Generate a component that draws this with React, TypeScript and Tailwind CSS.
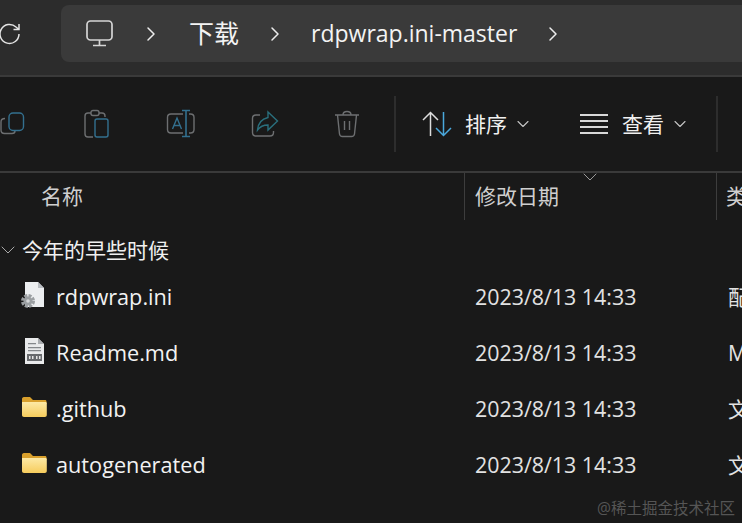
import React from 'react';
import { ChevronDown, ChevronRight } from 'lucide-react';

const font = 'font-["Open_Sans","Noto_Sans_CJK_SC",sans-serif]';

const toolbarIcons = [
    <svg key="copy" className="mr-[2px]" width="26" height="26" viewBox="0 0 26 26" fill="none" strokeWidth="1.4">
        <path d="M5 7.500C2.500 7.500 1 9 1 11v8c0 2 1.500 3.500 3.500 3.500H12c1.500 0 3-1 3-2.500" stroke="#6d6f71" />
        <rect x="9" y="2" width="14.500" height="17.500" rx="4" stroke="#33708f" />
    </svg>,
    <svg key="paste" width="28" height="30" viewBox="0 0 28 30" fill="none" strokeWidth="1.4">
        <path d="M8 4H5C3 4 2 5.500 2 7v18c0 1.500 1 3 3 3h5M22 8V7c0-1.500-1-3-3-3h-3" stroke="#6d6f71" />
        <rect x="8" y="1.500" width="8" height="5" rx="2" stroke="#6d6f71" />
        <rect x="12" y="10" width="13" height="18" rx="2" stroke="#33708f" />
    </svg>,
    <svg key="rename" width="30" height="30" viewBox="0 0 30 30" fill="none" strokeWidth="1.4">
        <path d="M17 5H5C3 5 1.500 6.500 1.500 8.500v12C1.500 22.500 3 24 5 24h12M23 5h1.500c2 0 3.500 1.500 3.500 3.500v12c0 2-1.500 3.500-3.500 3.500H23" stroke="#6d6f71" />
        <path d="M16 1.500h8M20 1.500v26M16 27.500h8" stroke="#33708f" strokeWidth="1.600" />
        <path d="M6.500 20 11 9l4.500 11M8 16.500h6" stroke="#33708f" />
    </svg>,
    <svg key="share" width="28" height="28" viewBox="0 0 28 28" fill="none" strokeWidth="1.4">
        <path d="M9 5H5C3 5 1.500 6.500 1.500 8.500v14C1.500 24.500 3 26 5 26h14c2 0 3.500-1.500 3.500-3.500V21" stroke="#6d6f71" />
        <path d="M17 2l9.500 9-9.500 9v-5c-5 0-8 1.500-10.500 5 .5-6 4-11 10.500-12.500z" stroke="#2a6f7d" />
    </svg>,
    <svg key="trash" width="26" height="28" viewBox="0 0 26 28" fill="none" stroke="#6d6f71" strokeWidth="1.4">
        <path d="M1 5h24M9 5c0-2 1.500-3.500 4-3.500S17 3 17 5M3.500 5l2 19c.2 1.500 1.300 2.500 3 2.500h9c1.700 0 2.800-1 3-2.500l2-19M10.500 11v9M15.500 11v9" />
    </svg>,
];

const SheetIcon = () => (
    <svg width="24" height="28" viewBox="0 0 24 28">
        <path d="M4 1h13l6 6v19H4z" fill="#eceef0" />
        <path d="M17 1l6 6h-6z" fill="#b9bdc2" />
        <circle cx="7" cy="20" r="5.500" fill="none" stroke="#9b9fa2" strokeWidth="3" strokeDasharray="3 1.300" />
        <circle cx="7" cy="20" r="4.500" fill="#9b9fa2" />
        <circle cx="7" cy="20" r="1.800" fill="#d5d7d9" />
    </svg>
);

const ReadmeIcon = () => (
    <svg width="24" height="28" viewBox="0 0 24 28">
        <path d="M4 1h13l6 6v20H4z" fill="#e9eaeb" />
        <path d="M17 1l6 6h-6z" fill="#a9acaf" />
        <path d="M7 6h8v1.300H7zM7 10h13v1.300H7zM7 13h13v1.300H7z" fill="#85888b" />
        <path d="M6 17h15v7H6z" fill="#686a6d" />
        <path d="M8 19h1.500v3H8zM11 19h1.500v3H11zM15 19h1.500v3H15zM18 19h1.500v3H18z" fill="#e6e6e6" />
    </svg>
);

const FolderIcon = () => (
    <svg width="26" height="22" viewBox="0 0 26 22">
        <defs>
            <linearGradient id="folderFill" x1="0" y1="0" x2="0" y2="1">
                <stop offset="0" stopColor="#fde9a5" />
                <stop offset="1" stopColor="#f6cc5c" />
            </linearGradient>
        </defs>
        <path d="M1 3c0-1 .6-2 2-2h6l3 3h12c1 0 1.500.7 1.500 1.500V8H1z" fill="#d9a02c" />
        <path d="M1 6h23.500c.8 0 1.300.6 1.300 1.400V19c0 1.200-.8 2-2 2H3c-1.200 0-2-.8-2-2z" fill="url(#folderFill)" />
    </svg>
);

const rows = [
    { icon: <SheetIcon />, name: 'rdpwrap.ini', type: '配' },
    { icon: <ReadmeIcon />, name: 'Readme.md', type: 'M' },
    { icon: <FolderIcon />, name: '.github', type: '文' },
    { icon: <FolderIcon />, name: 'autogenerated', type: '文' },
];

export default function App() {
    return (
        <div className={`relative w-[742px] h-[523px] overflow-hidden bg-[#191919] text-[#f0f0f0] ${font}`}>
            {/* address bar */}
            <div className="h-[77px] bg-[#2c2c2c] border-b-2 border-[#3a3a3a] flex items-start">
                <div className="w-[61px] pt-[22px] shrink-0 overflow-hidden">
                    <svg className="-ml-[2px]" width="24" height="24" viewBox="0 0 24 24" fill="none" stroke="#e4e4e4" strokeWidth="1.500">
                        <path d="M21 12a9.500 9.500 0 1 1-3-7l3 2.500M21 2v5.500h-5.500" />
                    </svg>
                </div>
                <div className="mt-[5px] w-[681px] h-[57px] bg-[#3a3a3a] rounded-l-lg flex items-center pl-[25px]">
                    <svg className="shrink-0" width="27" height="27" viewBox="0 0 27 27" fill="none" stroke="#d5d5d5" strokeWidth="1.700">
                        <rect x="1" y="1" width="25" height="19" rx="3.500" />
                        <path d="M13.500 20v5M7 25.500h13" />
                    </svg>
                    <ChevronRight className="ml-[26px] text-[#ededed] shrink-0" size={24} strokeWidth={1.500} />
                    <span className="ml-[26px] text-[25px] leading-none text-[#f3f3f3]">下载</span>
                    <ChevronRight className="ml-[24px] text-[#ededed] shrink-0" size={24} strokeWidth={1.500} />
                    <span className="ml-[24px] text-[23px] leading-none text-[#f3f3f3] whitespace-nowrap">rdpwrap.ini-master</span>
                    <ChevronRight className="ml-[24px] text-[#ededed] shrink-0" size={24} strokeWidth={1.500} />
                </div>
            </div>

            {/* toolbar */}
            <div className="h-[96px] flex items-center border-b-2 border-[#3a3a3a]">
                <div className="flex items-center w-[394px] h-[56px] gap-[55px] shrink-0">
                    {toolbarIcons}
                </div>
                <div className="h-[56px] border-l-2 border-[#2d2d2d] flex items-center pl-[26px]">
                    <svg className="shrink-0" width="30" height="26" viewBox="0 0 30 26" fill="none" strokeWidth="1.500">
                        <path d="M1 9l7.500-7.500L16 9M8.500 1.500V25" stroke="#dcdcdc" />
                        <path d="M14 17l7.500 7.500L29 17M21.500 1v23.500" stroke="#4aa8dc" />
                    </svg>
                    <span className="ml-[13px] text-[21px] leading-none">排序</span>
                    <ChevronDown className="ml-[6px] text-[#c5c5c5] shrink-0" size={20} strokeWidth={1.300} />
                    <div className="ml-[47px] w-[28px] flex flex-col gap-[4px] shrink-0">
                        <div className="h-[2px] bg-[#d8d8d8]" />
                        <div className="h-[2px] bg-[#d8d8d8]" />
                        <div className="h-[2px] bg-[#d8d8d8]" />
                        <div className="h-[2px] bg-[#d8d8d8]" />
                    </div>
                    <span className="ml-[14px] text-[21px] leading-none">查看</span>
                    <ChevronDown className="ml-[6px] text-[#c5c5c5] shrink-0" size={20} strokeWidth={1.300} />
                    <div className="ml-[26px] h-[56px] border-l-2 border-[#2d2d2d]" />
                </div>
            </div>

            {/* column headers */}
            <div className="h-[47px] flex text-[21px] text-[#cfcfcf] leading-none">
                <div className="w-[464px] shrink-0 pl-[41px] pt-[13px]">名称</div>
                <div className="relative w-[252px] shrink-0 border-l border-[#3d3d3d] pl-[10px] pt-[13px]">
                    修改日期
                    <ChevronDown className="absolute left-[113px] -top-[8px] text-[#9a9a9a]" size={24} strokeWidth={1} />
                </div>
                <div className="border-l border-[#3d3d3d] pl-[9px] pt-[13px] whitespace-nowrap">类</div>
            </div>

            {/* group header */}
            <div className="h-[49px] pt-[11px] flex items-center text-[#f0f0f0]">
                <ChevronDown className="-ml-[4px] text-[#a9a9a9] shrink-0" size={24} strokeWidth={1} />
                <span className="ml-[2px] text-[21px] leading-none">今年的早些时候</span>
            </div>

            {/* file rows */}
            {rows.map((row) => (
                <div key={row.name} className="h-[56px] flex items-center leading-none">
                    <div className="w-[56px] -mt-[4px] pl-[21px] flex items-center shrink-0">{row.icon}</div>
                    <div className="w-[419px] shrink-0 text-[#f2f2f2] text-[21.700px]">{row.name}</div>
                    <div className="w-[253px] shrink-0 text-[#e2e2e2] text-[21.400px]">2023/8/13 14:33</div>
                    <div className="text-[#e2e2e2] text-[21px] whitespace-nowrap">{row.type}</div>
                </div>
            ))}

            {/* watermark */}
            <div className="absolute right-[7px] bottom-[7px] text-[15.500px] leading-none text-[#555555]">@稀土掘金技术社区</div>
        </div>
    );
}
